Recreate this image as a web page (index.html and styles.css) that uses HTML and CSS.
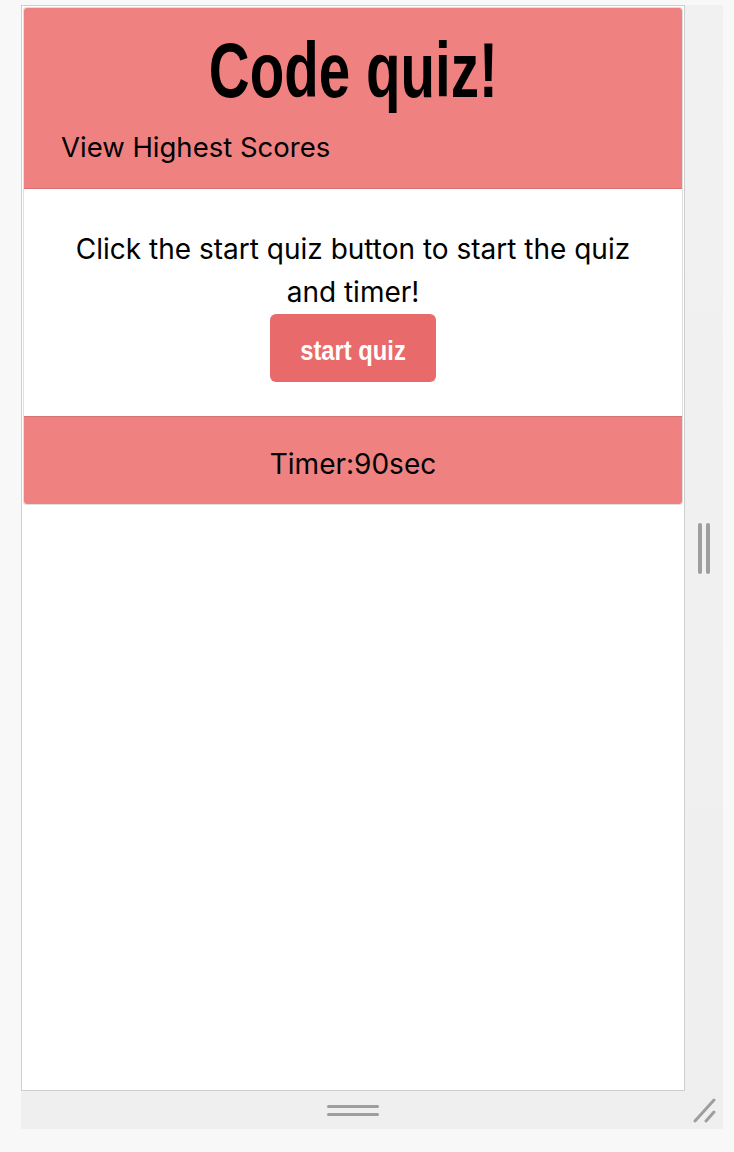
FILE: index.html
```html
<!DOCTYPE html>
<html lang="en">
<head>
<meta charset="utf-8">
<title>Code quiz!</title>
<link rel="stylesheet" href="styles.css">
</head>
<body>
<div class="stage">
  <div class="viewport">
    <div class="card">
      <header class="card-header">
        <h1 class="title"><span class="title-text">Code quiz!</span></h1>
        <a class="scores-link" href="#">View Highest Scores</a>
      </header>
      <main class="card-body">
        <p class="intro">Click the start quiz button to start the quiz and timer!</p>
        <button class="start-btn" type="button"><span class="start-text">start quiz</span></button>
      </main>
      <footer class="card-footer">Timer:90sec</footer>
    </div>
  </div>
  <div class="handle-right"><span></span><span></span></div>
  <div class="handle-bottom"><span></span><span></span></div>
  <div class="handle-corner">
    <svg width="26" height="26" viewBox="0 0 26 26"><path d="M4 24 L23 3 M15 24 L23 15" stroke="#9e9e9e" stroke-width="3" stroke-linecap="round" fill="none"/></svg>
  </div>
</div>
</body>
</html>
```
FILE: styles.css
```css
html, body {
  margin: 0;
  padding: 0;
}
body {
  background: #f8f8f8;
  font-family: Inter, "Liberation Sans", sans-serif;
  color: #000;
}
.stage {
  margin: 5px 0 0 21px;
  width: 702px;
  height: 1124px;
  background: linear-gradient(#f1f1f1, #efefef);
  display: grid;
  grid-template-columns: 664px 38px;
  grid-template-rows: 1086px 38px;
}
.viewport {
  box-sizing: border-box;
  border: 1px solid #cfcfcf;
  background: #fff;
  padding: 1px;
}
.card {
  border: 1px solid rgba(0,0,0,0.125);
  border-radius: 4px;
  overflow: hidden;
  background: #fff;
}
.card-header {
  background: #f08181;
  border-bottom: 1px solid rgba(0,0,0,0.1);
  height: 180px;
  box-sizing: content-box;
  padding: 0 37px;
}
.title {
  margin: 0;
  padding-top: 22px;
  text-align: center;
  font-family: "Liberation Sans", Arial, sans-serif;
  font-weight: 700;
  font-size: 78px;
  line-height: 80px;
}
.title-text {
  display: inline-block;
  transform: scaleX(0.725);
}
.scores-link {
  display: block;
  margin-top: 17px;
  color: #000;
  text-decoration: none;
  font-size: 27.5px;
  line-height: 40px;
}
.card-body {
  display: flex;
  flex-direction: column;
  align-items: center;
  padding: 39px 46px 34px;
}
.intro {
  margin: 0;
  text-align: center;
  font-size: 28px;
  line-height: 43px;
}
.start-btn {
  width: 166px;
  height: 68px;
  border: none;
  border-radius: 6px;
  background: #e96a6a;
  color: #fff;
  font-family: "Liberation Sans", Arial, sans-serif;
  font-weight: 700;
  font-size: 27px;
  padding: 6px 0 0;
  cursor: pointer;
}
.start-text {
  display: inline-block;
  transform: scaleX(0.88);
}
.card-footer {
  background: #f08181;
  border-top: 1px solid rgba(0,0,0,0.1);
  height: 88px;
  box-sizing: border-box;
  display: flex;
  align-items: center;
  justify-content: center;
  font-size: 28px;
  padding-top: 6px;
}
.handle-right {
  display: flex;
  align-items: center;
  justify-content: center;
  gap: 4px;
}
.handle-right span {
  width: 4px;
  height: 51px;
  border-radius: 2px;
  background: #9e9e9e;
}
.handle-bottom {
  display: flex;
  flex-direction: column;
  align-items: center;
  justify-content: center;
  gap: 5px;
}
.handle-bottom span {
  width: 52px;
  height: 3px;
  border-radius: 2px;
  background: #9e9e9e;
}
.handle-corner {
  display: flex;
  align-items: center;
  justify-content: center;
}
```
